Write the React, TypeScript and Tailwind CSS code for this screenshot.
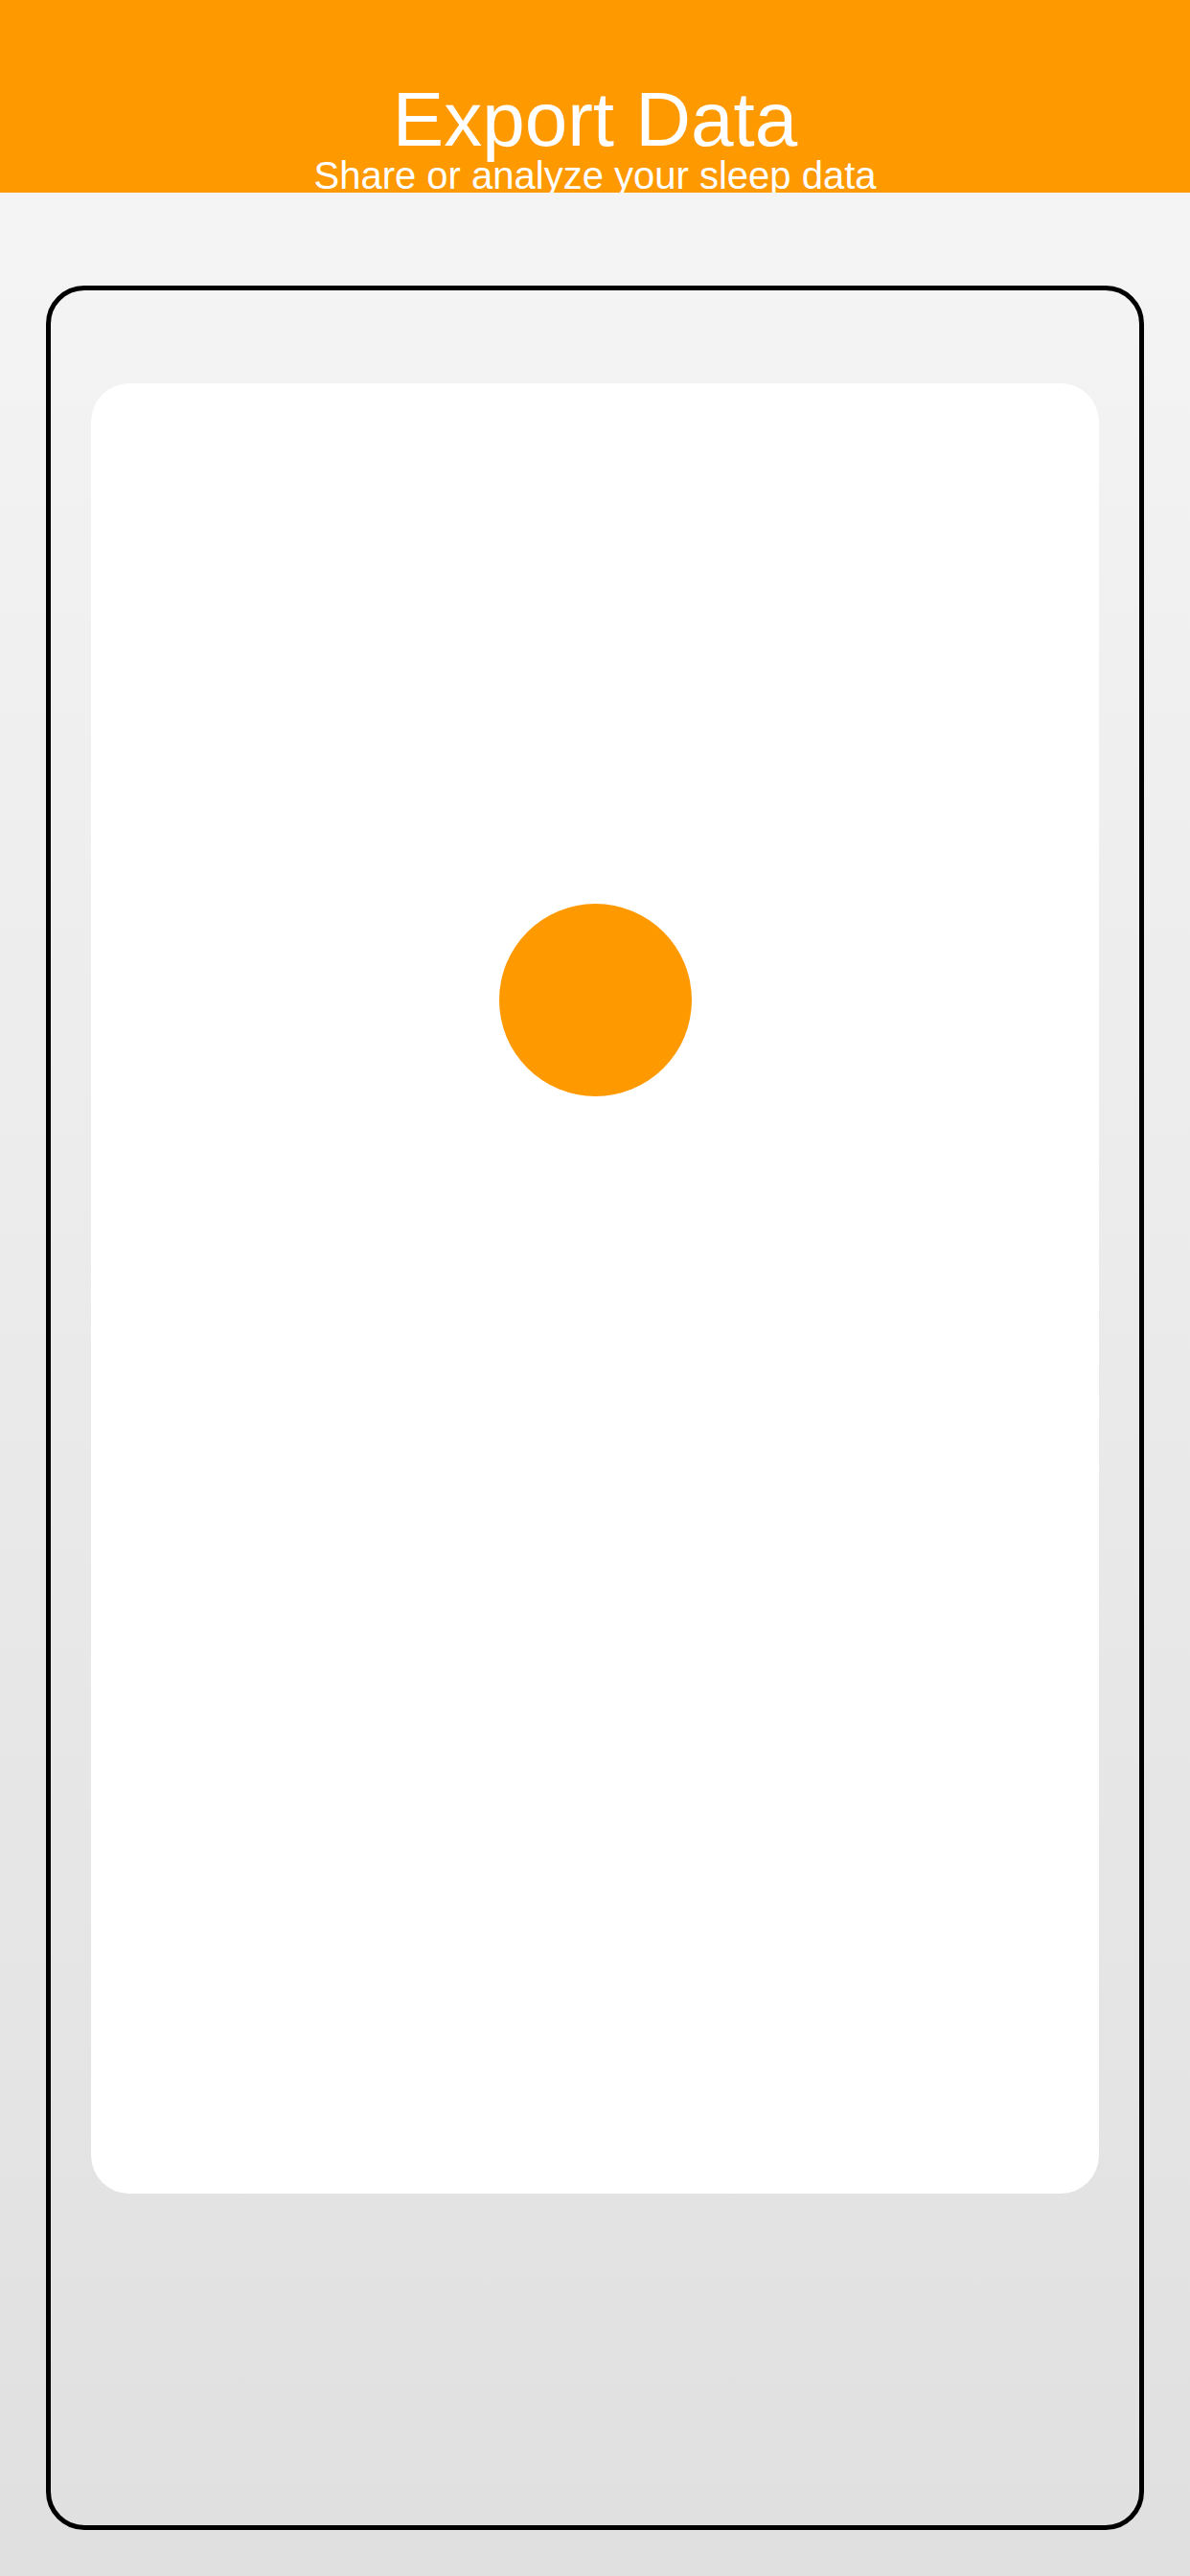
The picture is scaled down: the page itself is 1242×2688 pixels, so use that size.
export default function App() {
  return (
    <div className="min-h-screen flex flex-col font-['Liberation_Sans',Arial,sans-serif]">
      <header className="h-[201px] shrink-0 bg-[#ff9900] flex flex-col items-center pt-[87px] text-white">
        <h1 className="text-[80px] leading-[76px] font-normal">Export Data</h1>
        <p className="text-[40px] leading-[40px] whitespace-nowrap">Share or analyze your sleep data</p>
      </header>

      <main className="flex-1 flex flex-col bg-gradient-to-b from-[#f4f4f4] to-[#e0e0e0] px-[48px] pt-[97px] pb-[48px]">
        <div className="flex-1 border-[5px] border-black rounded-[40px] px-[42px] pt-[97px]">
          <div className="h-[1889px] bg-white rounded-[40px] flex justify-center pt-[543px]">
            <div className="w-[201px] h-[201px] rounded-full bg-[#ff9900]" />
          </div>
        </div>
      </main>
    </div>
  )
}
